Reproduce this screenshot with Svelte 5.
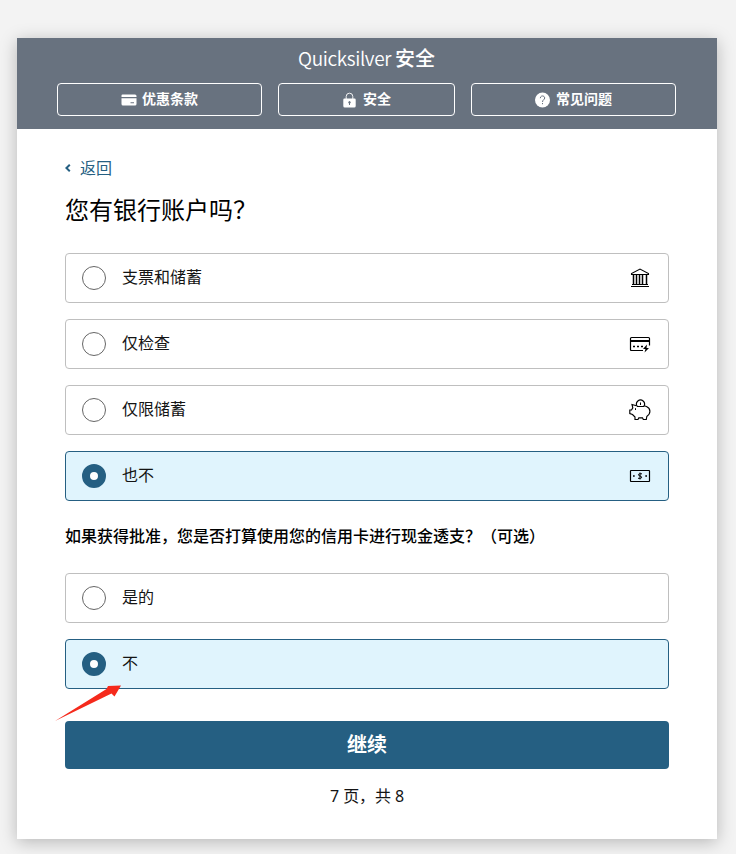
<script lang="ts">
	type Option = {
		label: string;
		icon?: 'bank' | 'card' | 'piggy' | 'cash';
	};

	const accountOptions: Option[] = [
		{ label: '支票和储蓄', icon: 'bank' },
		{ label: '仅检查', icon: 'card' },
		{ label: '仅限储蓄', icon: 'piggy' },
		{ label: '也不', icon: 'cash' }
	];

	const advanceOptions: Option[] = [{ label: '是的' }, { label: '不' }];

	let account = $state(3);
	let advance = $state(1);
</script>

{#snippet optionIcon(name: string)}
	<svg class="option-icon" width="24" height="24" viewBox="0 0 24 24" fill="none" stroke="currentColor">
		{#if name === 'bank'}
			<path d="M3.500 8.500V7.500L12 3L20.500 7.500V8.500ZM3 20.500H21M4 18.500H20" stroke-width="1.100" />
			<path d="M5.500 9V18M8.500 9V18M11.500 9V18M14.500 9V18M18.500 9V18" stroke-width="1.500" />
		{:else if name === 'card'}
			<path d="M15 18.500H3.500Q2.500 18.500 2.500 17.500V6.500Q2.500 5.500 3.500 5.500H20.500Q21.500 5.500 21.500 6.500V13.500" stroke-width="1.200" />
			<path d="M2.500 9H21.500" stroke-width="2" />
			<path d="M5 14.500H7M9 14.500H11M13 14.500H15" stroke-width="1.700" />
			<path d="M19 12.500L15 17H17.500L16.500 20.500L21 16H18.500Z" fill="currentColor" stroke="none" />
		{:else if name === 'piggy'}
			<path d="M8.500 7.800L4 6.500L4.800 9.800L3.500 12H1.800V15.500L4.500 16.500L7 19V21.500H10L10.800 19.800H14.500L15.300 21.500H18.300L18.800 18.500C23 15.500 23 10.500 18.500 8.500L16 7.800M9 8.500H16" stroke-width="1.150" />
			<path d="M9.200 8.300A4 4 0 1 1 15.800 8.300" stroke-width="1.150" />
			<path d="M12.500 4.500V7M7.500 10.200V12" />
		{:else}
			<rect x="2.500" y="6.500" width="19" height="11" rx="0.500" stroke-width="1.200" />
			<path d="M5 12H6.700M17.300 12H19" stroke-width="1.600" />
			<path d="M14 9.800H11.500Q10.500 9.800 10.500 10.800T12 12T13.600 13.200T12.500 14.300H10M12 8.500V15.500" />
		{/if}
	</svg>
{/snippet}

{#snippet option(item: Option, selected: boolean, select: () => void)}
	<button class="option" class:selected role="radio" aria-checked={selected} onclick={select}>
		<span class="radio"></span>
		<span class="option-label">{item.label}</span>
		{#if item.icon}
			{@render optionIcon(item.icon)}
		{/if}
	</button>
{/snippet}

<main class="card">
	<header>
		<div class="title">Quicksilver <strong>安全</strong></div>
		<nav>
			<button class="nav-btn">
				<svg width="16" height="16" viewBox="0 0 16 16" fill="currentColor">
					<path d="M1.500 2.500H14Q15.500 2.500 15.500 4V5H0.500V3.500Q0.500 2.500 1.500 2.500ZM0.500 6.200H15.500V12Q15.500 13.500 14 13.500H2Q0.500 13.500 0.500 12ZM9.500 10.200V11.200H13V10.200Z" fill-rule="evenodd" />
				</svg>
				<span>优惠条款</span>
			</button>
			<button class="nav-btn">
				<svg width="16" height="16" viewBox="0 0 16 16" fill="currentColor">
					<path d="M4.200 7V4.500A3.300 3.300 0 0 1 10.800 4.500V7" fill="none" stroke="currentColor" stroke-width="0.900" />
					<path d="M2.500 6.500H12.500Q13.700 6.500 13.700 7.700V14Q13.700 15.500 12.200 15.500H2.800Q1.300 15.500 1.300 14V7.700Q1.300 6.500 2.500 6.500ZM7 11.500V13H8V11.500A1.200 1.200 0 1 0 7 11.500Z" fill-rule="evenodd" />
				</svg>
				<span>安全</span>
			</button>
			<button class="nav-btn">
				<svg width="16" height="16" viewBox="0 0 16 16">
					<circle cx="7.500" cy="8" r="7.500" fill="currentColor" />
					<path d="M5.300 6.200C5.300 3.200 9.700 3.300 9.700 6C9.700 7.800 7.500 7.700 7.500 10M7.500 11V12.200" fill="none" stroke="#68727f" />
				</svg>
				<span>常见问题</span>
			</button>
		</nav>
	</header>

	<section class="content">
		<button class="back">
			<svg width="6" height="8" viewBox="0 0 6 8" fill="none" stroke="currentColor" stroke-width="2">
				<path d="M4.800 0.700L1.400 4L4.800 7.300" />
			</svg>
			返回
		</button>
		<h1>您有银行账户吗？</h1>

		<div class="options" role="radiogroup">
			{#each accountOptions as item, i}
				{@render option(item, account === i, () => (account = i))}
			{/each}
		</div>

		<h2>如果获得批准，您是否打算使用您的信用卡进行现金透支？（可选）</h2>

		<div class="options" role="radiogroup">
			{#each advanceOptions as item, i}
				{@render option(item, advance === i, () => (advance = i))}
			{/each}
			<svg class="arrow" width="68" height="38" viewBox="0 0 68 38">
				<path d="M0 37L51.500 5L53 2L66 1.500L59.500 12.500L56.500 9.500Z" fill="#f52a1c" />
			</svg>
		</div>

		<button class="continue">继续</button>
		<div class="page">7 页，共 8</div>
	</section>
</main>

<style>
	:global(body) {
		background: #f3f3f3;
	}
	.card {
		width: 700px;
		height: 801px;
		margin: 38px 0 15px 17px;
		box-sizing: border-box;
		background: #fff;
		box-shadow: 0 3px 16px rgba(0, 0, 0, 0.25);
		color: #141414;
		font-family: 'Noto Sans', 'Noto Sans CJK SC', sans-serif;
	}
	button {
		margin: 0;
		font-family: inherit;
		cursor: pointer;
	}
	header {
		height: 91px;
		box-sizing: border-box;
		padding: 6px 41px 0 40px;
		background: #68727f;
		color: #fff;
	}
	.title {
		height: 28px;
		font-family: 'Noto Sans CJK SC', sans-serif;
		font-size: 19px;
		line-height: 28px;
		font-weight: 350;
		letter-spacing: -0.35px;
		text-align: center;
	}
	.title strong {
		font-size: 20px;
		font-weight: 500;
		letter-spacing: 0;
	}
	nav {
		display: grid;
		grid-template-columns: 205px 177px 205px;
		gap: 16px;
		margin-top: 11px;
	}
	.nav-btn {
		display: flex;
		align-items: center;
		justify-content: center;
		gap: 5px;
		height: 33px;
		padding: 0;
		border: 1px solid #fff;
		border-radius: 4px;
		background: none;
		color: #fff;
		font-size: 14px;
		font-weight: 700;
		line-height: 20px;
	}
	.nav-btn span {
		padding-bottom: 2px;
	}
	.content {
		padding: 29px 48px 0;
	}
	.back {
		display: flex;
		align-items: center;
		gap: 9px;
		height: 20px;
		padding: 0;
		border: 0;
		background: none;
		color: #255f82;
		font-size: 16px;
		line-height: 20px;
	}
	h1 {
		margin: 16px 0 27px;
		font-size: 24px;
		font-weight: 400;
		line-height: 32px;
		color: #000;
	}
	.options {
		position: relative;
		display: flex;
		flex-direction: column;
		gap: 16px;
	}
	.option {
		display: flex;
		align-items: center;
		height: 50px;
		padding: 0 16px;
		border: 1px solid #bfbfbf;
		border-radius: 4px;
		background: #fff;
		color: #141414;
		font-size: 16px;
		text-align: left;
	}
	.option.selected {
		border-color: #255f82;
		background: #e0f4fd;
	}
	.radio {
		width: 24px;
		height: 24px;
		box-sizing: border-box;
		border: 1px solid #666;
		border-radius: 50%;
		background: #fff;
	}
	.selected .radio {
		border: 8px solid #255f82;
	}
	.option-label {
		flex: 1;
		margin-left: 16px;
		padding-bottom: 2px;
		line-height: 24px;
	}
	.option-icon {
		color: #000;
	}
	h2 {
		margin: 23px 0 25px;
		font-size: 16px;
		font-weight: 500;
		line-height: 24px;
		color: #000;
	}
	.arrow {
		position: absolute;
		left: -10px;
		top: 111px;
	}
	.continue {
		display: block;
		width: 100%;
		height: 48px;
		margin-top: 32px;
		padding: 0;
		border: 0;
		border-radius: 4px;
		background: #255f82;
		color: #fff;
		font-size: 20px;
		font-weight: 700;
		line-height: 28px;
	}
	.page {
		margin-top: 15px;
		font-size: 16px;
		line-height: 24px;
		letter-spacing: -0.1px;
		text-align: center;
	}
</style>
